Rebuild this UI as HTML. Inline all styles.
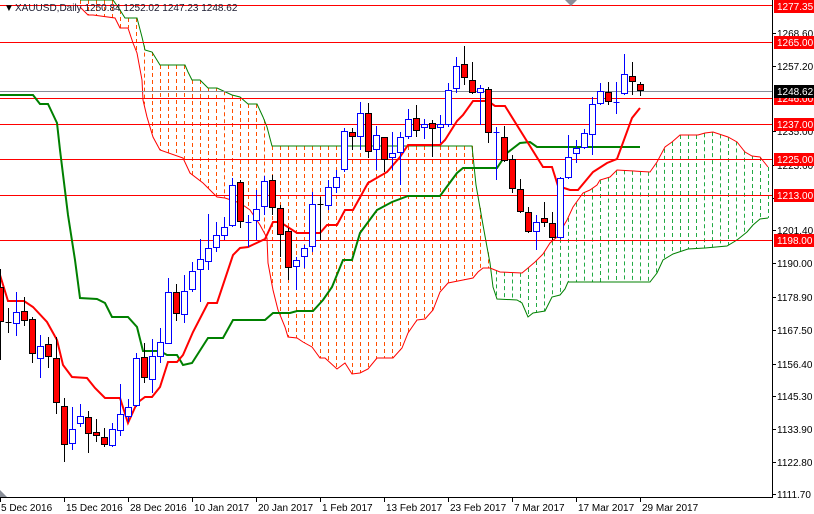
<!DOCTYPE html>
<html><head><meta charset="utf-8"><style>
html,body{margin:0;padding:0;background:#fff;width:814px;height:514px;overflow:hidden}
svg{display:block}
text{font-family:"Liberation Sans",Tahoma,sans-serif;font-size:10px}
</style></head><body>
<svg id="c" width="814" height="514" xmlns="http://www.w3.org/2000/svg"></svg>
<script>
const S=document.getElementById('c');let h='';
function pl(pts,st,w,extra){h+=`<polyline fill="none" stroke="${st}" stroke-width="${w}" ${extra||''} points="${pts.map(p=>p.join(',')).join(' ')}"/>`;}
function interp(P,x){if(x<P[0][0]||x>P[P.length-1][0])return null;for(let i=1;i<P.length;i++){if(x<=P[i][0]){const a=P[i-1],b=P[i];const t=b[0]==a[0]?0:(x-a[0])/(b[0]-a[0]);return a[1]+t*(b[1]-a[1]);}}return null;}
const B=[[80,0],[113,0],[120,10],[125,18],[137,18],[142,37],[145,50],[152,52],[160,65],[185,65],[188,72],[192,80],[200,80],[208,88],[217,88],[232,95],[240,97],[248,104],[257,104],[263,117],[267,127],[272,146],[472,146],[476,185],[483,225],[487,247],[490,263],[493,287],[497,299],[517,300],[522,303],[528,317],[533,313],[545,311],[552,297],[560,295],[565,289],[568,282],[650,282],[657,273],[663,260],[673,254],[688,249],[705,248],[727,246],[737,240],[747,232],[753,225],[760,219],[768,218]];
const A=[[80,7],[88,15],[93,15],[115,18],[120,28],[128,28],[133,43],[137,53],[142,80],[143,100],[147,117],[153,137],[160,150],[183,158],[190,173],[203,183],[217,197],[225,198],[240,203],[250,210],[260,225],[267,238],[268,263],[273,290],[278,310],[285,327],[288,337],[297,338],[303,342],[312,347],[320,358],[325,358],[337,369],[345,363],[352,374],[360,373],[368,369],[377,358],[393,358],[402,348],[408,333],[417,320],[425,319],[433,310],[440,292],[448,283],[463,280],[473,278],[478,272],[483,268],[490,268],[500,272],[522,273],[528,268],[535,262],[543,254],[550,243],[557,237],[567,220],[573,207],[583,193],[590,190],[597,185],[600,180],[610,177],[617,170],[650,172],[657,162],[665,147],[672,142],[680,135],[698,135],[705,133],[713,132],[728,137],[737,142],[745,152],[752,156],[760,157],[768,167]];
for(let x=80;x<=768;x+=8){const b=interp(B,x),a=interp(A,x);if(b==null||a==null)continue;const col=b<a?'#ff4f00':'#22aa44';const y1=Math.min(a,b),y2=Math.max(a,b);h+=`<line x1="${x+.5}" y1="${y1}" x2="${x+.5}" y2="${y2}" stroke="${col}" stroke-width="1" stroke-dasharray="4,3"/>`;}
pl(B,'#008000',1);pl(A,'#ff0000',1);
[5,42,98,124,159,195,240].forEach(y=>h+=`<line x1="0" y1="${y+.5}" x2="772" y2="${y+.5}" stroke="#ff0000" stroke-width="1"/>`);
h+=`<line x1="0" y1="91.5" x2="772" y2="91.5" stroke="#8a8f99" stroke-width="1"/>`;
pl([[0,95],[33,95],[40,104],[48,104],[57,123],[60,150],[68,215],[75,260],[80,298],[97,299],[105,303],[112,317],[128,317],[137,327],[143,351],[160,351],[167,355],[177,355],[183,365],[192,363],[208,338],[223,338],[233,320],[265,320],[273,313],[290,313],[297,311],[313,311],[323,300],[332,287],[343,260],[352,260],[360,233],[377,210],[392,202],[408,196],[440,196],[457,173],[463,168],[497,168],[507,153],[520,143],[530,142],[537,147],[640,147]],'#008000',2);
pl([[0,275],[8,301],[24,301],[33,307],[47,322],[57,340],[63,365],[72,377],[87,378],[95,388],[105,398],[120,398],[128,423],[137,403],[145,397],[152,397],[160,387],[168,362],[177,362],[183,355],[193,332],[208,303],[217,303],[233,255],[240,248],[248,247],[265,239],[273,222],[280,222],[297,233],[320,233],[327,225],[337,225],[345,210],[353,210],[368,183],[387,172],[400,157],[408,145],[440,145],[445,140],[457,121],[463,115],[473,101],[488,101],[495,106],[505,106],[543,167],[552,167],[558,186],[570,190],[578,190],[593,172],[607,163],[617,159],[632,118],[640,108]],'#ff0000',2);
const C=`0 r 287 322 269 360|8 k 322 322 308 333|16 b 312 324 292 336|24 r 311 321 297 326|32 r 319 354 317 363|40 b 346 359 335 378|48 r 344 357 337 368|56 r 358 403 337 414|64 r 406 445 398 462|72 b 429 444 407 450|80 b 416 424 404 427|88 r 417 434 411 453|96 r 432 436 419 442|104 r 437 445 428 447|112 b 429 446 423 447|120 b 414 431 384 436|128 b 407 417 399 422|136 b 358 406 353 407|144 r 357 378 343 383|152 b 356 380 339 393|160 b 342 357 328 363|168 b 292 344 278 344|176 r 292 314 284 321|184 b 291 315 275 323|192 b 271 290 262 292|200 b 259 270 239 302|208 b 248 262 214 270|216 b 235 248 222 252|224 b 227 236 217 240|232 b 185 226 178 227|240 r 182 222 180 228|248 b 222 222 215 247|256 b 209 221 190 240|264 b 181 207 176 215|272 r 180 208 175 215|280 r 208 235 205 257|288 r 231 268 228 280|296 b 260 267 257 290|304 b 248 257 245 268|312 b 204 247 192 252|320 k 204 204 197 240|328 b 187 206 180 210|336 b 177 188 170 193|344 b 131 170 128 172|352 r 132 137 128 150|360 b 113 137 102 150|368 r 113 152 103 158|376 b 135 150 126 170|384 r 137 160 137 172|392 b 153 158 132 170|400 b 137 153 132 185|408 b 119 137 109 139|416 r 118 131 105 137|424 b 124 128 119 139|432 r 123 129 120 157|440 b 124 128 115 143|448 b 90 125 83 127|456 b 66 89 57 93|464 r 64 78 46 85|472 r 80 93 62 94|480 b 88 93 85 125|488 r 89 133 87 143|496 b 132 132 127 180|504 r 137 161 126 162|512 r 159 189 155 193|520 r 189 212 179 213|528 r 212 232 207 233|536 b 222 232 215 250|544 r 218 223 202 227|552 r 223 238 212 240|560 b 178 238 177 239|568 b 157 178 135 179|576 b 148 154 140 163|584 b 133 148 129 149|592 b 104 135 97 155|600 b 91 104 83 105|608 r 92 102 82 105|616 b 102 102 82 114|624 b 74 94 54 95|632 r 76 82 62 95|640 r 84 91 82 96`;
C.split('|').forEach(s=>{let [x,t,o,c,hi,lo]=s.split(' ');x=+x+.5;o=+o;c=+c;hi=+hi;lo=+lo;
const wc=t=='b'?'#0000ff':'#000';
h+=`<line x1="${x}" y1="${hi}" x2="${x}" y2="${lo}" stroke="${wc}" stroke-width="1"/>`;
if(c-o<1){h+=`<line x1="${x-3}" y1="${o+.5}" x2="${x+3}" y2="${o+.5}" stroke="${wc}" stroke-width="1"/>`;}
else h+=`<rect x="${x-3}" y="${o+.5}" width="6" height="${c-o-1}" fill="${t=='r'?'#ff0000':'#fff'}" stroke="${wc}" stroke-width="1"/>`;});
h+=`<line x1="772.5" y1="0" x2="772.5" y2="497" stroke="#000" stroke-width="1"/><line x1="0" y1="497.5" x2="773" y2="497.5" stroke="#000" stroke-width="1"/>`;
[[33,'1268.60'],[66,'1257.20'],[131,'1235.00'],[165,'1223.60'],[198,'1212.20'],[230,'1201.40'],[263,'1190.00'],[297,'1178.90'],[330,'1167.50'],[364,'1156.40'],[396,'1145.30'],[429,'1133.90'],[462,'1122.80'],[494,'1111.70']].forEach(([y,t])=>{h+=`<line x1="772" y1="${y+.5}" x2="776" y2="${y+.5}" stroke="#000"/><text x="777" y="${y+4}" fill="#000">${t}</text>`;});
[[6,'1277.35'],[42,'1265.00'],[98,'1246.00'],[124,'1237.00'],[159,'1225.00'],[195,'1213.00'],[240,'1198.00']].forEach(([y,t])=>{h+=`<rect x="774" y="${y-6}" width="40" height="13" fill="#ff0000"/><text x="777" y="${y+4}" fill="#fff">${t}</text>`;});
h+=`<rect x="774" y="85" width="40" height="13" fill="#000"/><text x="777" y="95" fill="#fff">1248.62</text>`;
[[0,'5 Dec 2016',-1],[64,'15 Dec 2016'],[128,'28 Dec 2016'],[192,'10 Jan 2017'],[256,'20 Jan 2017'],[320,'1 Feb 2017'],[384,'13 Feb 2017'],[448,'23 Feb 2017'],[512,'7 Mar 2017'],[576,'17 Mar 2017'],[640,'29 Mar 2017']].forEach(([x,t,o])=>{h+=`<line x1="${x+.5}" y1="497" x2="${x+.5}" y2="502" stroke="#000"/><text x="${x+2+(o||0)}" y="511" fill="#000">${t}</text>`;});
h+=`<polygon points="0,490 7,497 0,497" fill="#8a8f99"/><polygon points="565,0 577,0 571,6" fill="#8a8f99"/>`;
h+=`<text x="4" y="11" fill="#000" font-size="9">▼</text><text x="15" y="11" fill="#1a1a2e">XAUUSD,Daily  1250.84 1252.02 1247.23 1248.62</text>`;
S.innerHTML=h;
</script>
</body></html>
